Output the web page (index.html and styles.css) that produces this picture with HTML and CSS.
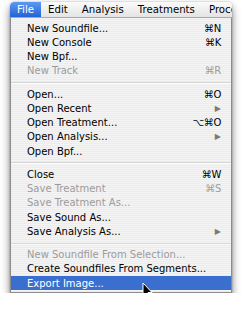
FILE: index.html
```html
<!DOCTYPE html>
<html lang="en">

<head>
  <meta charset="UTF-8">
  <title>File Menu</title>
  <link rel="stylesheet" href="styles.css">
</head>

<body>

  <div class="window">
    <div class="menubar">
      <span class="title active">File</span>
      <span class="title">Edit</span>
      <span class="title">Analysis</span>
      <span class="title">Treatments</span>
      <span class="title">Processing</span>
    </div>

    <div class="menu">
      <div class="item"><span>New Soundfile...</span><span class="key">⌘N</span></div>
      <div class="item"><span>New Console</span><span class="key">⌘K</span></div>
      <div class="item"><span>New Bpf...</span></div>
      <div class="item disabled"><span>New Track</span><span class="key">⌘R</span></div>
      <div class="separator"></div>
      <div class="item"><span>Open...</span><span class="key">⌘O</span></div>
      <div class="item"><span>Open Recent</span><span class="arrow">▶</span></div>
      <div class="item"><span>Open Treatment...</span><span class="key">⌥⌘O</span></div>
      <div class="item"><span>Open Analysis...</span><span class="arrow">▶</span></div>
      <div class="item"><span>Open Bpf...</span></div>
      <div class="separator"></div>
      <div class="item"><span>Close</span><span class="key">⌘W</span></div>
      <div class="item disabled"><span>Save Treatment</span><span class="key">⌘S</span></div>
      <div class="item disabled"><span>Save Treatment As...</span></div>
      <div class="item"><span>Save Sound As...</span></div>
      <div class="item"><span>Save Analysis As...</span><span class="arrow">▶</span></div>
      <div class="separator"></div>
      <div class="item disabled"><span>New Soundfile From Selection...</span></div>
      <div class="item"><span>Create Soundfiles From Segments...</span></div>
      <div class="item selected"><span>Export Image...</span></div>
    </div>

    <!-- mouse pointer over the selected item -->
    <svg class="pointer" width="12" height="18" viewBox="0 0 12 18">
      <path d="M1 1 L1 14 L4 11 L6.5 16.5 L8.5 15.5 L6 10.5 L10 10.5 Z" fill="#000" stroke="#fff" stroke-width="1"/>
    </svg>
  </div>

</body>

</html>
```

FILE: styles.css
```css
body {
  margin: 0;
  background-color: #fff;
  font-family: "DejaVu Sans", Verdana, sans-serif;
  font-size: 10px;
}

.window {
  position: relative;
  width: 222px;
  margin: 2px 0 0 10px;
  border-radius: 4px 4px 0 0;
  box-shadow: 0 5px 8px rgba(0, 0, 0, 0.5), 0 0 2px rgba(0, 0, 0, 0.3);
}

.menubar {
  display: flex;
  height: 15px;
  overflow: hidden;
  white-space: nowrap;
  border-radius: 4px 4px 0 0;
  border-bottom: 1px solid #a8a8a8;
  background: linear-gradient(#fafafa, #e4e4e4);
}

.title {
  padding: 0 7px;
  line-height: 15px;
  font-size: 10.2px;
  color: #000;
}

.title.active {
  color: #fff;
  background: linear-gradient(#5b9af0, #2462d6);
  border-radius: 4px 0 0 0;
}

.menu {
  padding: 3px 0 2px;
  border: 1px solid #8c8c8c;
  border-top: 0;
  background: repeating-linear-gradient(#f4f4f4 0, #f4f4f4 1px, #ececec 1px, #ececec 2px);
}

.item {
  display: flex;
  justify-content: space-between;
  align-items: center;
  height: 14.25px;
  padding: 0 10px 0 16px;
  color: #000;
  white-space: nowrap;
}

.item.disabled {
  color: #9c9c9c;
}

.item.selected {
  color: #fff;
  background-color: #3a6fd0;
}

.key {
  letter-spacing: -0.3px;
}

.arrow {
  font-size: 8px;
  color: #7a7a7a;
}

.separator {
  height: 9px;
  background: linear-gradient(transparent 4px, #d6d6d6 4px, #d6d6d6 5px, #fbfbfb 5px, #fbfbfb 6px, transparent 6px);
}

.pointer {
  position: absolute;
  left: 132px;
  top: 280px;
}
```
